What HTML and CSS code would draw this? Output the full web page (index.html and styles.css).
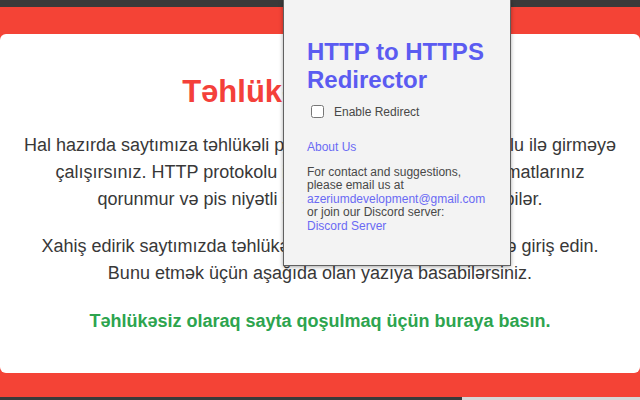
FILE: index.html
```html
<!DOCTYPE html>
<html lang="az">
<head>
    <meta charset="UTF-8">
    <meta name="viewport" content="width=device-width, initial-scale=1.0">
    <title>Təhlükəli Bağlantı</title>
    <link rel="stylesheet" href="styles.css">
</head>
<body>
    <div class="top-bar"></div>

    <div class="warning-card">
        <h1 class="warning-title">Təhlükəli Bağlantı!</h1>
        <p class="warning-text">
            Hal hazırda saytımıza təhlükəli protokol olaraq HTTP protokolu ilə girməyə<br>
            çalışırsınız. HTTP protokolu ilə göndərdiyiniz bütün məlumatlarınız<br>
            qorunmur və pis niyətli şəxslər tərəfindən oğurlana bilər.
        </p>
        <p class="warning-text">
            Xahiş edirik saytımızda təhlükəsiz olan HTTPS protokolu ilə giriş edin.<br>
            Bunu etmək üçün aşağıda olan yazıya basabilərsiniz.
        </p>
        <p class="warning-text"><a class="secure-link" href="#">Təhlükəsiz olaraq sayta qoşulmaq üçün buraya basın.</a></p>
    </div>

    <div class="bottom-bar">
        <div class="bottom-dark"></div>
        <div class="bottom-light"></div>
    </div>

    <!-- extension popup -->
    <div class="popup">
        <h1 class="popup-title">HTTP to HTTPS Redirector</h1>
        <label class="toggle-row">
            <input type="checkbox" id="enableRedirect">
            <span>Enable Redirect</span>
        </label>
        <a class="popup-link about-link" href="#">About Us</a>
        <p class="popup-text">
            For contact and suggestions,<br>
            please email us at<br>
            <a class="popup-link" href="#">azeriumdevelopment@gmail.com</a><br>
            or join our Discord server:<br>
            <a class="popup-link" href="#">Discord Server</a>
        </p>
    </div>
</body>
</html>
```

FILE: styles.css
```css
body {
    font-family: "Liberation Sans", Arial, sans-serif;
    margin: 0;
    padding: 0;
    background-color: #f44336;
    height: 100vh;
    overflow: hidden;
    display: flex;
    flex-direction: column;
}
.top-bar {
    height: 7px;
    background-color: #3a3a3a;
    flex-shrink: 0;
}
.warning-card {
    margin-top: 27px;
    background-color: #fff;
    border-radius: 6px;
    padding: 40px 16px 38px;
    text-align: center;
    flex-shrink: 0;
}
.warning-title {
    margin: 0 0 22px;
    font-size: 31px;
    line-height: 36px;
    color: #f4403a;
    white-space: nowrap;
}
.warning-text {
    margin: 0;
    font-size: 18px;
    line-height: 27px;
    color: #383838;
    white-space: nowrap;
}
.warning-text + .warning-text {
    margin-top: 20px;
}
.warning-text:last-child {
    margin-top: 21px;
}
.secure-link {
    color: #2da44e;
    font-weight: bold;
    text-decoration: none;
}
.bottom-bar {
    margin-top: auto;
    height: 3px;
    display: flex;
    flex-shrink: 0;
}
.bottom-dark {
    width: 462px;
    background-color: #3a3a3a;
}
.bottom-light {
    flex: 1;
    background-color: #d6d6d6;
}
.popup {
    position: absolute;
    top: 0;
    left: 283px;
    width: 180px;
    height: 227px;
    padding: 38px 23px 0 23px;
    background-color: #f3f3f3;
    border: 1px solid #606060;
    border-top: none;
    box-shadow: 0 1px 4px rgba(0, 0, 0, 0.35);
    font-size: 12px;
    color: #484848;
}
.popup-title {
    margin: 0;
    font-size: 24px;
    line-height: 28px;
    color: #5b5bf1;
}
.toggle-row {
    margin-top: 8px;
    display: flex;
    align-items: center;
    font-size: 12px;
}
.toggle-row input {
    width: 13px;
    height: 13px;
    margin: 3px 10px 3px 4px;
}
.popup-link {
    color: #6a6af3;
    text-decoration: none;
}
.about-link {
    display: block;
    margin-top: 19px;
    line-height: 14px;
}
.popup-text {
    margin: 12px 0 0;
    line-height: 13.4px;
    white-space: nowrap;
}
```
